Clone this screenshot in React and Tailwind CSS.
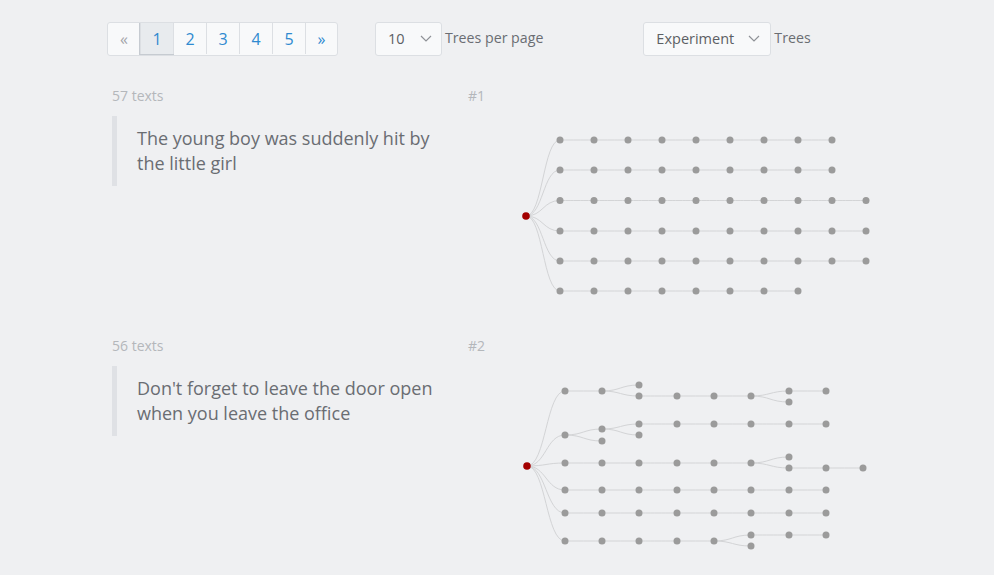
import React from 'react'

const ROOT1 = [526, 216]
const rows1 = [
  { y: 140, n: 9 },
  { y: 170, n: 9 },
  { y: 200.5, n: 10 },
  { y: 231, n: 10 },
  { y: 261, n: 10 },
  { y: 291, n: 8 },
]
const tree1 = rows1.map((r) => [ROOT1, ...Array.from({ length: r.n }, (_, i) => [560 + 34 * i, r.y])])

const ROOT2 = [527, 466]
const X2 = [565, 602, 639, 677, 714, 751, 789, 826, 863]
const line = (y, n) => X2.slice(0, n).map((x) => [x, y])
const tree2 = [
  [ROOT2, [565, 391], [602, 391], [639, 396], [677, 396], [714, 396], [751, 396], [789, 391], [826, 391]],
  [[602, 391], [639, 385]],
  [[751, 396], [789, 402]],
  [ROOT2, [565, 435], [602, 429], [639, 424], [677, 424], [714, 424], [751, 424], [789, 424], [826, 424]],
  [[565, 435], [602, 441]],
  [[602, 429], [639, 435]],
  [ROOT2, ...line(463, 6), [789, 468], [826, 468], [863, 468]],
  [[751, 463], [789, 457]],
  [ROOT2, ...line(490, 8)],
  [ROOT2, ...line(513, 8)],
  [ROOT2, ...line(541, 5), [751, 535], [789, 535], [826, 535]],
  [[714, 541], [751, 546]],
]

function link([x0, y0], [x1, y1]) {
  const mx = (x0 + x1) / 2
  return `M${x0},${y0}C${mx},${y0} ${mx},${y1} ${x1},${y1}`
}

function Tree({ paths, root, top }) {
  const edges = []
  const seen = new Map()
  paths.forEach((p) => {
    for (let i = 1; i < p.length; i++) edges.push(link(p[i - 1], p[i]))
    p.forEach((pt) => {
      if (pt !== root) seen.set(pt.join(','), pt)
    })
  })
  return (
    <svg width="380" height="250" viewBox={`505 ${top} 380 250`} className="ml-[15px] shrink-0">
      {edges.map((d, i) => (
        <path key={i} d={d} fill="none" stroke="#d3d4d6" strokeWidth="1" />
      ))}
      {[...seen.values()].map(([x, y]) => (
        <circle key={`${x}-${y}`} cx={x} cy={y} r="3.5" fill="#9b9b9b" />
      ))}
      <circle cx={root[0]} cy={root[1]} r="3.8" fill="#a30000" />
    </svg>
  )
}

function Chevron() {
  return (
    <svg viewBox="0 0 12 7" className="h-[7px] w-[12px]" aria-hidden="true">
      <path d="M1 1 6 6 11 1" fill="none" stroke="#8f9297" strokeWidth="1.2" />
    </svg>
  )
}

function Row({ count, index, text, tree, root, top }) {
  return (
    <div className="flex h-[250px]">
      <div className="w-[383px] shrink-0 px-[5px]">
        <div className="flex justify-between text-[14px] leading-[20px] text-[#b4b7bb]">
          <span>{count} texts</span>
          <span>#{index}</span>
        </div>
        <div className="mt-[10px] border-l-[5px] border-[#dfe1e5] py-[10px] pl-[20px] pr-[28px] text-[18px] leading-[25px] text-[#6a6d72]">
          {text}
        </div>
      </div>
      <Tree paths={tree} root={root} top={top} />
    </div>
  )
}

export default function App() {
  const pages = ['1', '2', '3', '4', '5']
  return (
    <div className="min-h-screen bg-[#eff0f2] pl-[107px] pt-[22px] font-['Open_Sans',sans-serif]">
      <div className="flex items-center">
        <div className="flex h-[34px] overflow-hidden rounded-[3px] border border-[#dcdfe3] bg-[#f8f9fa] pb-[1px] text-[16px]">
          <div className="flex w-[32px] items-center justify-center text-[#a3a6aa]">«</div>
          {pages.map((p) => (
            <div
              key={p}
              className={`flex w-[33px] items-center justify-center border-l border-[#dcdfe3] ${
                p === '1' ? 'bg-[#e8ebee] text-[#2f8ad0] outline outline-1 outline-[#c6cbd1]' : 'text-[#2f8ad0]'
              }`}
            >
              {p}
            </div>
          ))}
          <div className="flex w-[32px] items-center justify-center border-l border-[#dcdfe3] text-[#2f8ad0]">»</div>
        </div>
        <div className="ml-[37px] flex h-[34px] w-[67px] items-center justify-between rounded-[3px] border border-[#dcdfe3] bg-[#f8f9fa] pb-[1px] pl-[12px] pr-[9px] text-[14.5px] text-[#5c5f64]">
          <span>10</span>
          <Chevron />
        </div>
        <span className="ml-[3px] pb-[3px] text-[14.2px] text-[#6a6d72]">Trees per page</span>
        <div className="ml-[100px] flex h-[34px] w-[128px] items-center justify-between rounded-[3px] border border-[#dcdfe3] bg-[#f8f9fa] pb-[1px] pl-[12px] pr-[10px] text-[14.5px] text-[#5c5f64]">
          <span>Experiment</span>
          <Chevron />
        </div>
        <span className="ml-[3px] pb-[3px] text-[14.2px] text-[#6a6d72]">Trees</span>
      </div>
      <div className="mt-[30px]">
        <Row count={57} index={1} text="The young boy was suddenly hit by the little girl" tree={tree1} root={ROOT1} top={86} />
        <Row count={56} index={2} text="Don't forget to leave the door open when you leave the office" tree={tree2} root={ROOT2} top={336} />
      </div>
    </div>
  )
}
